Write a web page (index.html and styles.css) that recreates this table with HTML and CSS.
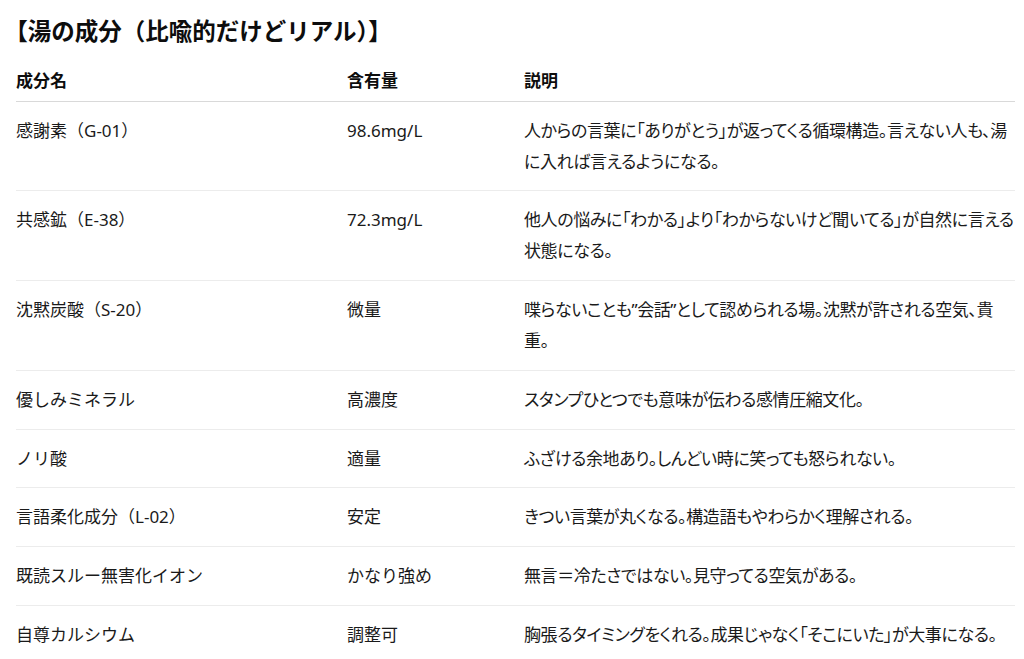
FILE: index.html
```html
<!DOCTYPE html>
<html lang="ja">
<head>
<meta charset="utf-8">
<title>湯の成分</title>
<link rel="stylesheet" href="styles.css">
</head>
<body>
<main class="page">
  <h1 class="title"><span class="half">【</span>湯の成分（比喩的だけどリアル<span class="half">）</span>】</h1>
  <table class="spec">
    <colgroup>
      <col class="c-name">
      <col class="c-amount">
      <col class="c-desc">
    </colgroup>
    <thead>
      <tr><th>成分名</th><th>含有量</th><th>説明</th></tr>
    </thead>
    <tbody>
      <tr><td>感謝素（G-01）</td><td>98.6mg/L</td><td class="desc">人からの言葉に「ありがとう」が返ってくる循環構造。言えない人も、湯<br>に入れば言えるようになる。</td></tr>
      <tr><td>共感鉱（E-38）</td><td>72.3mg/L</td><td class="desc">他人の悩みに「わかる」より「わからないけど聞いてる」が自然に言える<br>状態になる。</td></tr>
      <tr><td>沈黙炭酸（S-20）</td><td>微量</td><td class="desc">喋らないことも”会話”として認められる場。沈黙が許される空気、貴<br>重。</td></tr>
      <tr><td>優しみミネラル</td><td>高濃度</td><td class="desc">スタンプひとつでも意味が伝わる感情圧縮文化。</td></tr>
      <tr><td>ノリ酸</td><td>適量</td><td class="desc">ふざける余地あり。しんどい時に笑っても怒られない。</td></tr>
      <tr><td>言語柔化成分（L-02）</td><td>安定</td><td class="desc">きつい言葉が丸くなる。構造語もやわらかく理解される。</td></tr>
      <tr><td>既読スルー無害化イオン</td><td>かなり強め</td><td class="desc">無言＝冷たさではない。見守ってる空気がある。</td></tr>
      <tr><td>自尊カルシウム</td><td>調整可</td><td class="desc">胸張るタイミングをくれる。成果じゃなく「そこにいた」が大事になる。</td></tr>
    </tbody>
  </table>
</main>
</body>
</html>
```

FILE: styles.css
```css
html, body {
  margin: 0;
  padding: 0;
  background: #ffffff;
}
body {
  font-family: "Noto Sans", "Noto Sans CJK JP", sans-serif;
  color: #1a1a1a;
  font-size: 17px;
}
.page {
  padding: 15px 9px 0 16px;
}
.title {
  margin: 0;
  font-size: 23.5px;
  line-height: 30px;
  font-weight: 700;
  color: #0d0d0d;
  font-family: "Noto Sans CJK JP", sans-serif;
}
.half {
  font-feature-settings: "halt";
}
.spec {
  width: 100%;
  margin-top: 19px;
  border-collapse: collapse;
  table-layout: fixed;
}
.c-name { width: 331px; }
.c-amount { width: 177px; }
.spec th,
.spec td {
  text-align: left;
  vertical-align: top;
  padding: 0;
  line-height: 31px;
}
.spec th {
  font-weight: 700;
  font-size: 17px;
  color: #0d0d0d;
  padding-bottom: 6px;
  border-bottom: 1px solid #d9d9d9;
  font-family: "Noto Sans CJK JP", sans-serif;
}
.spec td {
  padding-top: 13px;
  padding-bottom: 13.75px;
  border-bottom: 1px solid #ececec;
}
.spec tbody tr:first-child td {
  padding-top: 12.5px;
}
.spec tbody tr:last-child td {
  border-bottom: none;
}
.desc {
  font-feature-settings: "palt";
  letter-spacing: -0.4px;
  white-space: nowrap;
}
```
